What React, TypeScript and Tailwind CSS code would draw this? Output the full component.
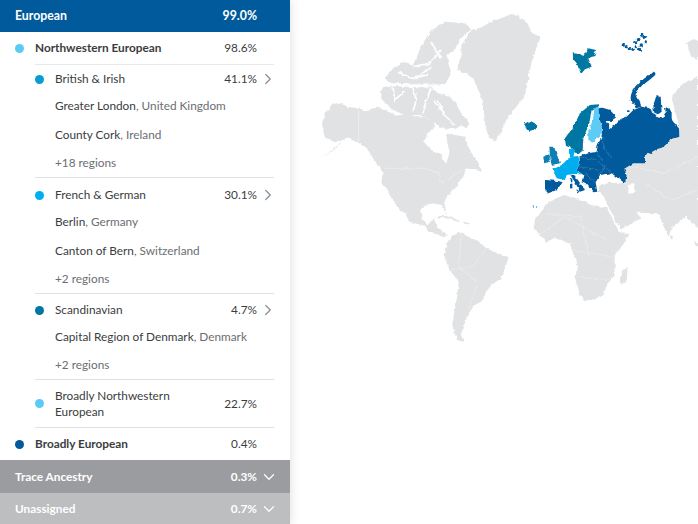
import type { ReactNode } from "react";
import { ChevronDown, ChevronRight } from "lucide-react";

const font = { fontFamily: "Lato, sans-serif" };

type Region = { name: string; country: string };

const groups: { name: string; pct: string; dot: string; pad: string; regions: Region[]; more: string }[] = [
  {
    name: "British & Irish",
    pct: "41.1%",
    dot: "bg-[#0a9bd0]",
    pad: "pt-[5px]",
    regions: [
      { name: "Greater London", country: "United Kingdom" },
      { name: "County Cork", country: "Ireland" },
    ],
    more: "+18 regions",
  },
  {
    name: "French & German",
    pct: "30.1%",
    dot: "bg-[#00aeef]",
    pad: "pt-[8px]",
    regions: [
      { name: "Berlin", country: "Germany" },
      { name: "Canton of Bern", country: "Switzerland" },
    ],
    more: "+2 regions",
  },
  {
    name: "Scandinavian",
    pct: "4.7%",
    dot: "bg-[#0076a3]",
    pad: "pt-[7px]",
    regions: [{ name: "Capital Region of Denmark", country: "Denmark" }],
    more: "+2 regions",
  },
];

const GRAY = "#e1e2e4";
const DARK = "#005a9c";
const TEAL = "#0076a3";

// each group of shapes is traced in its own 3x frame, anchored at a page point
function Frame({ x, y, children }: { x: number; y: number; children: ReactNode }) {
  return <g transform={`translate(${x} ${y}) scale(0.3333)`}>{children}</g>;
}

function Shapes({ points, fill }: { points: string[]; fill: string }) {
  return (
    <>
      {points.map((p) => (
        <polygon key={p} points={p} fill={fill} />
      ))}
    </>
  );
}

const northAmerica =
  "12,205 20,178 40,150 60,143 90,155 120,160 150,168 175,155 195,162 215,172 235,182 262,178 290,182 320,186 345,200 352,212 330,235 318,262 340,285 370,297 375,318 385,325 395,290 388,262 385,240 415,240 440,245 448,270 470,310 482,325 492,350 470,345 445,340 436,365 401,410 378,440 386,480 371,450 346,445 321,450 306,465 311,490 331,510 346,490 361,520 391,540 376,547 336,530 311,510 274,500 261,475 246,465 224,435 194,385 190,380 195,350 175,325 150,285 120,262 85,250 70,262 45,285 10,308 50,285 78,255 50,262 20,245";

const arctic = [
  "260,235 290,200 320,185 345,195 370,140 395,95 440,65 500,70 520,85 490,115 465,155 445,165 460,220 440,255 400,260 330,250 280,250",
  "250,262 300,258 345,262 400,262 420,280 450,285 470,305 490,340 515,370 505,385 490,375 472,388 430,385 405,365 370,345 320,345 285,330 262,310 250,295",
  "640,42 665,50 690,72 700,100 728,110 715,145 700,190 690,240 680,290 655,320 625,360 605,405 590,425 572,415 562,375 556,320 545,275 525,235 510,225 475,210 490,175 490,135 520,90 545,85 580,65 610,55",
  "1165,130 1185,118 1200,120 1200,180 1180,170",
];

const south = [
  // south america
  "437,255 445,225 462,198 490,185 510,200 540,212 565,235 600,250 632,262 622,290 610,325 580,345 565,365 550,395 530,405 515,425 497,465 490,490 500,515 478,510 462,470 470,420 478,375 482,335 455,300",
  // africa
  "708,170 712,145 730,125 745,100 775,85 800,75 825,85 860,95 880,105 925,112 945,150 962,182 995,192 975,225 950,255 950,290 950,315 928,345 915,375 895,388 860,392 845,370 830,320 840,290 822,240 815,220 790,210 770,205 745,215 725,195",
  // madagascar
  "990,290 985,335 970,345 965,322 975,302",
  // asia
  "1200,-282 1150,-255 1120,-220 1145,-125 1130,-95 1080,-70 1040,-40 990,-15 975,5 986,40 936,38 906,45 900,62 918,80 930,108 968,178 985,170 1030,145 1018,125 990,105 1005,118 1025,128 1065,130 1085,135 1095,165 1112,200 1122,170 1165,140 1185,160 1200,175",
  "1188,210 1198,222 1200,232 1192,226",
  "1116,195 1124,198 1124,208 1118,208",
];

const europeDark = [
  "205,40 218,38 240,45 258,65 250,78 230,78 240,100 258,88 272,72 290,65 310,45 335,35 365,42 375,65 395,70 420,62 428,78 447,100 448,125 418,135 405,155 380,163 345,183 345,205 310,205 282,222 290,240 285,265 258,245 245,235 210,240 197,262 202,290 190,292 172,270 155,262 160,240 140,225 150,205 148,185 175,175 200,170 203,150 215,125 215,95 205,60",
  "370,30 380,0 392,5 395,50 378,62 372,50",
  "405,35 425,45 425,75 400,70 408,55",
  "305,5 320,0 335,35 318,40",
  "45,255 85,258 98,262 80,285 55,295 45,285",
  "120,238 140,250 165,285 150,290 135,262",
  "122,250 127,250 127,262 122,262",
  "120,266 127,266 127,280 120,280",
  "138,284 152,284 146,292",
];

const countryLines = "M148 185L200 195L225 215L245 235M200 170L215 195M145 215L205 225M165 235L195 262M205 240L225 215M215 125L225 165L245 190";

function WorldMap() {
  return (
    <svg viewBox="298 0 400 524" className="block h-[524px] w-[400px]">
      <defs>
        <filter id="coast" x="-5%" y="-5%" width="110%" height="110%">
          <feTurbulence type="fractalNoise" baseFrequency="0.22" numOctaves="2" seed="4" result="n" />
          <feDisplacementMap in="SourceGraphic" in2="n" scale="3.5" xChannelSelector="R" yChannelSelector="G" />
          <feGaussianBlur stdDeviation="0.3" />
        </filter>
      </defs>
      <g filter="url(#coast)">
        <Frame x={318} y={55}>
          <polygon points={northAmerica} fill={GRAY} />
          <path d="M122 160V258M200 340H320L365 355L370 385L430 345" fill="none" stroke="#f0f1f2" strokeWidth="2" />
        </Frame>
        <Frame x={298} y={0}>
          <Shapes points={arctic} fill={GRAY} />
          {/* channels between the islands */}
          <path
            d="M345 200L395 190L430 150M360 230L400 200M300 215L340 235L390 225M400 130L430 175M285 262L290 300L320 275M345 265L355 300L345 335M400 265L385 300L375 340M420 300L440 345L470 375M430 330L405 300M260 256H440"
            fill="none"
            stroke="#fff"
            strokeWidth="5"
          />
        </Frame>
        <Frame x={298} y={170}>
          <Shapes points={south} fill={GRAY} />
          <polygon points="988,42 1005,40 1012,65 995,68" fill="#fff" />
          <path d="M421 140L456 142L486 155M496 158L515 162" fill="none" stroke={GRAY} strokeWidth="5" />
          <path
            d="M490 190L482 290L540 340L510 420M565 235L520 290L455 300M745 130L850 140L875 270M725 195L800 140L925 210M822 240L950 260M835 320L935 330M1040 40L1120 90L1200 60M1000 -10L1100 10L1200 -40"
            fill="none"
            stroke="#eeeff0"
            strokeWidth="2"
          />
        </Frame>
        {/* europe */}
        <Frame x={530} y={95}>
          <Shapes points={europeDark} fill={DARK} />
          <polygon points="105,130 130,95 150,55 180,30 205,28 205,40 185,45 178,85 160,130 158,165 145,175 128,170 120,150 108,155" fill={TEAL} />
          <polygon points="190,40 205,38 207,60 215,105 210,125 190,140 175,135 175,110 185,85" fill="#5bcbf5" />
          <Shapes points={["58,155 72,155 90,205 65,210 60,185", "40,185 58,178 60,200 42,205"]} fill="#0a7fb5" />
          <polygon points="65,225 95,210 120,185 145,183 150,205 140,225 155,238 125,238 110,240 105,255 80,250 75,235" fill="#00aeef" />
          <polygon points="120,160 135,165 130,185 120,185" fill="#00aeef" />
          <path d={countryLines} fill="none" stroke="#3f83b6" strokeWidth="2" />
        </Frame>
        <Frame x={520} y={30}>
          <polygon points="158,70 180,72 190,78 205,55 228,60 222,78 205,85 215,110 195,118 183,132 170,100 162,90" fill={TEAL} />
          <polygon points="12,282 30,272 55,285 48,298 28,303 20,295" fill={TEAL} />
        </Frame>
        <Frame x={298} y={0}>
          <path d="M1006 305C1000 285 1015 262 1030 250C1045 240 1055 232 1066 222" fill="none" stroke={DARK} strokeWidth="13" strokeLinecap="round" />
          {[
            [976, 135], [985, 140], [994, 146], [1010, 128], [1022, 118], [1032, 106], [1045, 125], [1030, 135], [1015, 140], [1040, 112], [1025, 148], [1005, 148],
          ].map(([cx, cy]) => (
            <circle key={`${cx}-${cy}`} cx={cx} cy={cy} r="5" fill={DARK} />
          ))}
          <circle cx={988} cy={332} r="4" fill={DARK} />
        </Frame>
        <Frame x={530} y={170}>
          <circle cx={10} cy={108} r="2" fill="#0a9bd0" />
          <circle cx={20} cy={111} r="2" fill="#0a9bd0" />
        </Frame>
      </g>
    </svg>
  );
}

function Dot({ className }: { className: string }) {
  return <span className={`h-[9px] w-[9px] shrink-0 rounded-full ${className}`} />;
}

export default function App() {
  return (
    <div className="flex h-[524px] w-[698px] overflow-hidden bg-white text-[11.8px] text-[#3a3d40]" style={font}>
      <aside className="flex w-[290px] shrink-0 flex-col shadow-[0_0_10px_rgba(0,0,0,0.14)]">
        <div className="flex h-[32px] shrink-0 items-center justify-between bg-[#005a9c] pl-[15px] pr-[33px] text-[12.3px] font-bold text-white">
          <span>European</span>
          <span>99.0%</span>
        </div>

        <div className="flex h-[32px] shrink-0 items-center pl-[15px] pr-[33px] font-bold">
          <Dot className="mr-[11px] bg-[#5bcbf5]" />
          <span className="flex-1">Northwestern European</span>
          <span className="font-normal">98.6%</span>
        </div>

        <div className="ml-[35px] mr-[16px] flex shrink-0 flex-col border-t border-[#e8e9ea]">
          {groups.map((g) => (
            <div key={g.name} className={`border-b border-[#e0e1e3] ${g.pad}`}>
              <div className="mb-[3px] flex h-[18px] items-center">
                <Dot className={`mr-[11px] ${g.dot}`} />
                <span className="flex-1">{g.name}</span>
                <span>{g.pct}</span>
                <ChevronRight className="-mr-[3px] ml-[2px] h-[18px] w-[18px] text-[#8a8d90]" strokeWidth={1.6} />
              </div>
              {g.regions.map((r) => (
                <div key={r.name} className="ml-[20px] flex h-[29px] items-center">
                  <span>
                    {r.name}
                    <span className="text-[#6b6e72]">, {r.country}</span>
                  </span>
                </div>
              ))}
              <div className="ml-[20px] flex h-[28px] items-center text-[#6b6e72]">{g.more}</div>
            </div>
          ))}
          <div className="flex h-[48px] items-center border-b border-[#e0e1e3] pr-[17px]">
            <Dot className="mr-[11px] bg-[#5bcbf5]" />
            <span className="flex-1 leading-[16px]">
              Broadly Northwestern
              <br />
              European
            </span>
            <span>22.7%</span>
          </div>
        </div>

        <div className="flex h-[32px] shrink-0 items-center pl-[15px] pr-[33px] font-bold">
          <Dot className="mr-[11px] bg-[#005a9c]" />
          <span className="flex-1">Broadly European</span>
          <span className="font-normal">0.4%</span>
        </div>

        <div className="flex h-[33px] shrink-0 items-center justify-between bg-[#9b9c9f] pl-[15px] pr-[12px] font-bold text-white">
          <span>Trace Ancestry</span>
          <span className="flex items-center gap-[3px]">
            0.3% <ChevronDown className="h-[18px] w-[18px]" strokeWidth={1.6} />
          </span>
        </div>
        <div className="flex flex-1 items-center justify-between bg-[#bdbec0] pl-[15px] pr-[12px] font-bold text-white">
          <span>Unassigned</span>
          <span className="flex items-center gap-[3px]">
            0.7% <ChevronDown className="h-[18px] w-[18px]" strokeWidth={1.6} />
          </span>
        </div>
      </aside>

      <main className="ml-[8px] min-w-0 flex-1">
        <WorldMap />
      </main>
    </div>
  );
}
